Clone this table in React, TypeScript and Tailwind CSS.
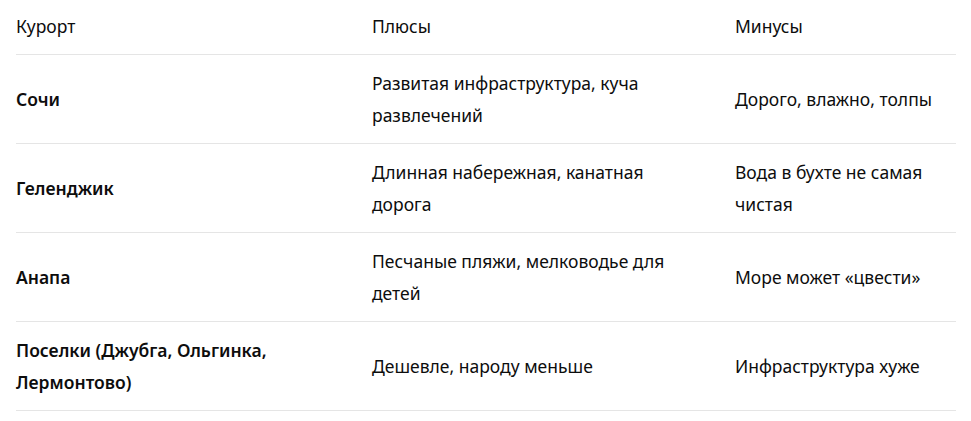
const rows = [
  { name: "Сочи", plus: "Развитая инфраструктура, куча развлечений", minus: "Дорого, влажно, толпы" },
  { name: "Геленджик", plus: "Длинная набережная, канатная дорога", minus: "Вода в бухте не самая чистая" },
  { name: "Анапа", plus: "Песчаные пляжи, мелководье для детей", minus: "Море может «цвести»" },
  { name: "Поселки (Джубга, Ольгинка, Лермонтово)", plus: "Дешевле, народу меньше", minus: "Инфраструктура хуже" },
];

export default function App() {
  return (
    <main className="min-h-screen bg-white px-4 pt-0 text-[17.5px] text-[#0d0d0d] font-['Noto_Sans',sans-serif]">
      <table className="w-[940px] border-collapse text-left">
        <colgroup>
          <col className="w-[356px]" />
          <col className="w-[363px]" />
          <col className="w-[221px]" />
        </colgroup>
        <thead>
          <tr className="border-b border-[#e5e5e5]">
            <th className="pt-[10px] pb-3 pr-10 font-normal leading-8 align-middle">Курорт</th>
            <th className="pt-[10px] pb-3 pr-10 font-normal leading-8 align-middle">Плюсы</th>
            <th className="pt-[10px] pb-3 font-normal leading-8 align-middle">Минусы</th>
          </tr>
        </thead>
        <tbody>
          {rows.map((r) => (
            <tr key={r.name} className="border-b border-[#e5e5e5]">
              <td className="py-3 pr-[60px] font-semibold leading-8 align-middle">{r.name}</td>
              <td className="py-3 pr-[48px] leading-8 align-middle">{r.plus}</td>
              <td className="py-3 leading-8 align-middle">{r.minus}</td>
            </tr>
          ))}
        </tbody>
      </table>
    </main>
  );
}
